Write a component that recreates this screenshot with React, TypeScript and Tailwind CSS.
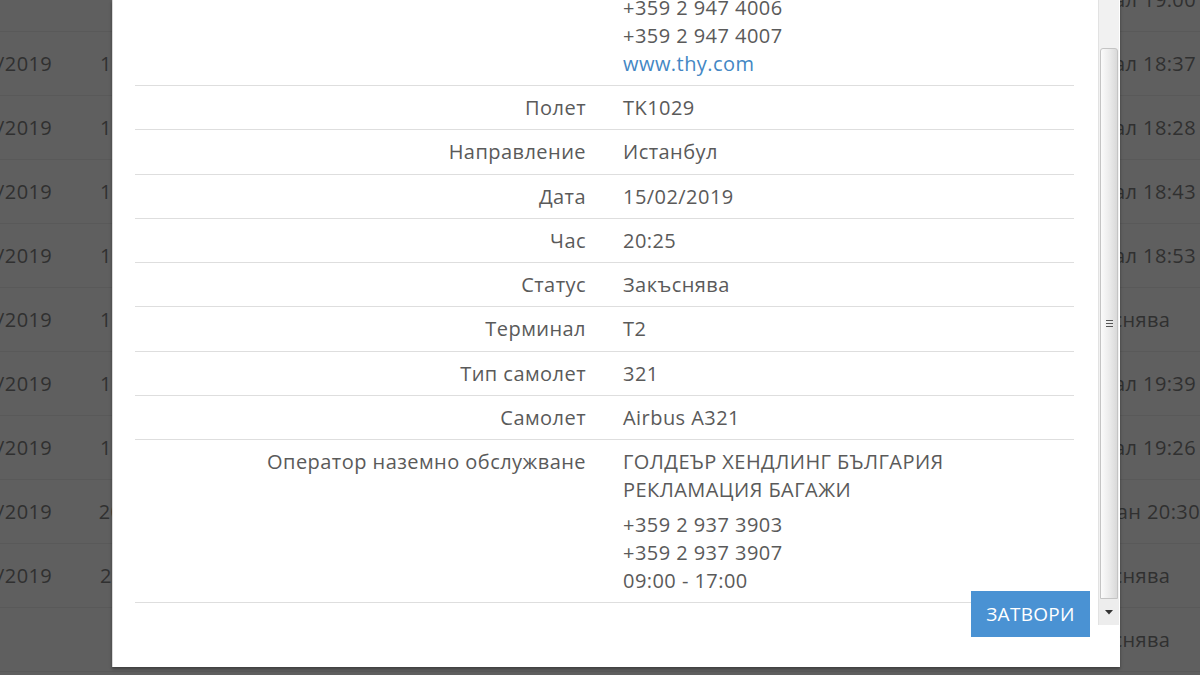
import React from "react";

const bgRows = [
  { date: "", time: "", status: "Кацнал 19:00" },
  { date: "15/02/2019", time: "18:15", status: "Кацнал 18:37" },
  { date: "15/02/2019", time: "18:20", status: "Кацнал 18:28" },
  { date: "15/02/2019", time: "18:35", status: "Кацнал 18:43" },
  { date: "15/02/2019", time: "18:40", status: "Кацнал 18:53" },
  { date: "15/02/2019", time: "19:05", status: "Закъснява" },
  { date: "15/02/2019", time: "19:15", status: "Кацнал 19:39" },
  { date: "15/02/2019", time: "19:20", status: "Кацнал 19:26" },
  { date: "15/02/2019", time: "20:10", status: "Очакван 20:30" },
  { date: "15/02/2019", time: "20:25", status: "Закъснява" },
  { date: "", time: "", status: "Закъснява" },
];

const details = [
  { label: "Полет", value: "TK1029" },
  { label: "Направление", value: "Истанбул" },
  { label: "Дата", value: "15/02/2019" },
  { label: "Час", value: "20:25" },
  { label: "Статус", value: "Закъснява" },
  { label: "Терминал", value: "T2" },
  { label: "Тип самолет", value: "321" },
  { label: "Самолет", value: "Airbus A321" },
];

function Scrollbar() {
  return (
    <div className="w-[21px] h-[625px] flex flex-col bg-[#f1f1f1] border-l border-[#e2e2e2]">
      <div className="h-[48px]" />
      <div className="h-[551px] mx-[1px] rounded-t-[3px] border border-[#c4c4c4] bg-gradient-to-r from-[#fbfbfb] via-[#ececec] to-[#d9d9d9] flex items-center justify-center">
        <div className="flex flex-col gap-[2px]">
          <div className="w-[7px] h-[1px] bg-[#555]" />
          <div className="w-[7px] h-[1px] bg-[#555]" />
          <div className="w-[7px] h-[1px] bg-[#555]" />
        </div>
      </div>
      <div className="flex-1 flex items-center justify-center bg-[#ededed]">
        <svg width="8" height="5" viewBox="0 0 8 5">
          <path d="M0 0 L8 0 L4 4.5 Z" fill="#333" />
        </svg>
      </div>
    </div>
  );
}

export default function App() {
  return (
    <div
      className="relative w-[1200px] h-[675px] overflow-hidden bg-[#5f5f5f] text-[#303030]"
      style={{ fontFamily: '"Open Sans", "Noto Sans", sans-serif' }}
    >
      {/* dimmed table behind the dialog */}
      <div className="-mt-[32px] -ml-[58px] text-[20px] tracking-[0.4px]">
        {bgRows.map((r, i) => (
          <div key={i} className="flex items-center h-[64px] border-b border-[#595959]">
            <div className="w-[158px] whitespace-nowrap">{r.date}</div>
            <div className="w-[964px] whitespace-nowrap">{r.time}</div>
            <div className="whitespace-nowrap">{r.status}</div>
          </div>
        ))}
      </div>

      {/* dialog */}
      <div className="absolute left-[112px] top-0 w-[1008px] h-[667px] bg-white border-l border-[#d8d8d8] shadow-[0_2px_3px_rgba(0,0,0,0.35)]">
        <div className="flex">
          <div className="flex-1 h-[625px] overflow-hidden pl-[22px] pr-[24px]">
            <div className="-mt-[6px] text-[20px] leading-[28px] tracking-[0.45px] text-[#5a5a5a]">
              <div className="grid grid-cols-[464px_1fr] pb-[7px] border-b border-[#dedede]">
                <div />
                <div className="pl-[24px]">
                  <div>+359 2 947 4006</div>
                  <div>+359 2 947 4007</div>
                  <div className="text-[#4387c4]">www.thy.com</div>
                </div>
              </div>
              {details.map((d) => (
                <div key={d.label} className="grid grid-cols-[464px_1fr] pt-[8px] pb-[7.25px] border-b border-[#dedede]">
                  <div className="text-right pr-[13px]">{d.label}</div>
                  <div className="pl-[24px]">{d.value}</div>
                </div>
              ))}
              <div className="grid grid-cols-[464px_1fr] pt-[8px] pb-[7px] border-b border-[#dedede]">
                <div className="text-right pr-[13px]">Оператор наземно обслужване</div>
                <div className="pl-[24px]">
                  <div>ГОЛДЕЪР ХЕНДЛИНГ БЪЛГАРИЯ</div>
                  <div>РЕКЛАМАЦИЯ БАГАЖИ</div>
                  <div className="mt-[7px]">+359 2 937 3903</div>
                  <div>+359 2 937 3907</div>
                  <div>09:00 - 17:00</div>
                </div>
              </div>
            </div>
          </div>
          <Scrollbar />
          <div className="w-[1px]" />
        </div>

        <button className="absolute left-[858px] top-[591px] w-[119px] h-[46px] bg-[#4a92d3] text-white text-[19px] tracking-[0.3px] uppercase flex items-center justify-center">
          Затвори
        </button>
      </div>
    </div>
  );
}
